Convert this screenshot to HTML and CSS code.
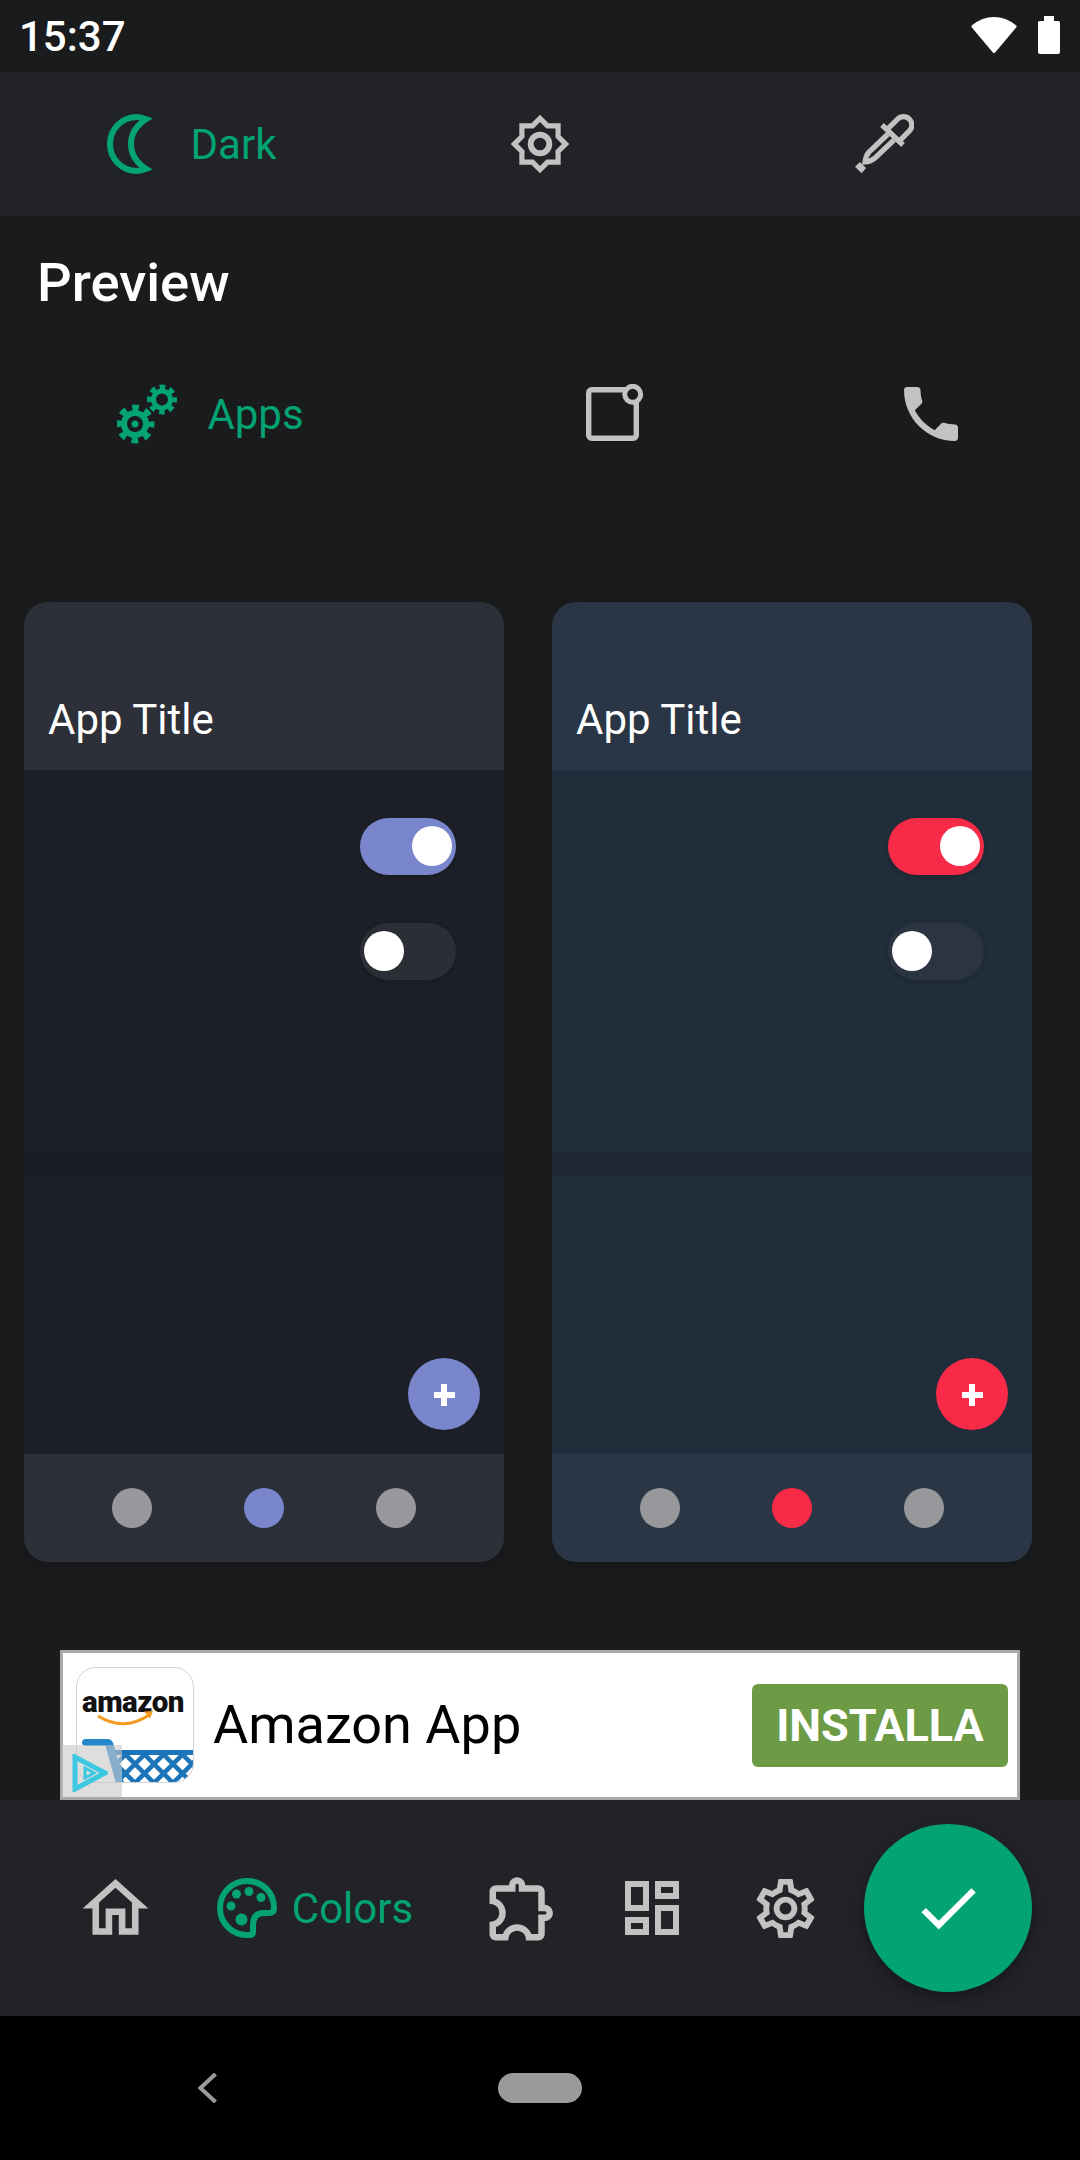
FILE: index.html
```html
<!DOCTYPE html>
<html lang="en">
<head>
<meta charset="utf-8">
<title>Colors</title>
<link rel="stylesheet" href="styles.css">
</head>
<body>
<div class="screen">
  <header class="status">
    <span class="time">15:37</span>
    <div class="status-icons">
      <svg class="wifi" viewBox="0 0 46 36"><path d="M23 34.500 2 9.500C8 4.500 15 1.500 23 1.500s15 3 21 8z" stroke="#fff" stroke-width="3" stroke-linejoin="round"/></svg>
      <svg class="battery" viewBox="0 0 22 38"><path d="M6 0h10v5h4.500q1.500 0 1.500 1.500V36q0 2-2 2H2q-2 0-2-2V6.500Q0 5 1.500 5H6z"/></svg>
    </div>
  </header>

  <nav class="modes">
    <div class="tab tab-active">
      <svg class="ic-moon" viewBox="0 0 46 60"><path class="green-line" stroke-width="6" stroke-miterlimit="12" d="M39 5.200C35 3.800 33 3 30 3 15 3 3 15 3 30s12 27 27 27c3 0 5-.8 9-2.200C30 49 24 40 24 30S30 11 39 5.200z"/></svg>
      <span>Dark</span>
    </div>
    <div class="tab">
      <svg class="ic-62" viewBox="0 0 24 24"><path class="gray" d="M20 8.690V4h-4.690L12 .69 8.690 4H4v4.690L.69 12 4 15.310V20h4.690L12 23.310 15.310 20H20v-4.690L23.310 12 20 8.690zm-2 5.790V18h-3.520L12 20.480 9.520 18H6v-3.520L3.520 12 6 9.520V6h3.520L12 3.520 14.480 6H18v3.520L20.480 12 18 14.480z"/><circle class="gray-ring" cx="12" cy="12" r="3.600" stroke-width="2.300"/></svg>
    </div>
    <div class="tab">
      <svg class="ic-60" viewBox="0 0 60 60"><g class="gray-line" stroke-width="5.200"><path d="M28 11 49 31"/><path d="M33 15.700 43.600 5.100a8.300 8.300 0 0 1 11.800 11.800L45 27.300"/><path d="M34 20 15 38q-3.500 4-4 10 6-.5 10-4l19-18"/></g><path class="gray" d="M1 52.700 6 48l6 6-4.300 5.300z"/></svg>
    </div>
  </nav>

  <main class="content">
    <h1 class="heading">Preview</h1>

    <div class="kinds">
      <div class="tab tab-active">
        <svg class="ic-gears" viewBox="0 0 62 60">
          <g class="green-line">
            <circle cx="18" cy="40" r="11" stroke-width="6"/>
            <circle cx="18" cy="40" r="16" stroke-width="7" stroke-dasharray="6.500 6.070" stroke-dashoffset="3.250"/>
            <circle cx="45" cy="15.500" r="8.500" stroke-width="5"/>
            <circle cx="45" cy="15.500" r="12.500" stroke-width="5" stroke-dasharray="5.500 4.320" stroke-dashoffset="2.750"/>
          </g>
          <circle class="green" cx="18" cy="40" r="3.500"/>
        </svg>
        <span>Apps</span>
      </div>
      <div class="tab">
        <svg class="ic-60" viewBox="0 0 60 60"><rect class="gray-line" x="2.700" y="5.700" width="47.600" height="48.600" rx="3" stroke-width="5.400"/><circle class="dot-ring" cx="46.700" cy="10.300" r="8" stroke-width="5"/></svg>
      </div>
      <div class="tab">
        <svg class="ic-72" viewBox="0 0 24 24"><path class="gray" d="M6.620 10.790c1.440 2.830 3.760 5.140 6.590 6.590l2.200-2.200c.27-.27.67-.36 1.020-.24 1.120.37 2.330.57 3.570.57.55 0 1 .45 1 1V20c0 .55-.45 1-1 1-9.390 0-17-7.610-17-17 0-.55.45-1 1-1h3.500c.55 0 1 .45 1 1 0 1.250.2 2.450.57 3.570.11.35.03.74-.25 1.020l-2.200 2.200z"/></svg>
      </div>
    </div>

    <section class="cards">
      <article class="card card-indigo">
        <div class="card-head">App Title</div>
        <div class="card-body">
          <div class="switch switch-on"><i class="thumb"></i></div>
          <div class="switch"><i class="thumb"></i></div>
        </div>
        <div class="card-rule"></div>
        <div class="card-lower">
          <div class="mini-fab"><i class="plus"></i></div>
        </div>
        <div class="card-foot">
          <i class="dot"></i><i class="dot dot-on"></i><i class="dot"></i>
        </div>
      </article>
      <article class="card card-blue">
        <div class="card-head">App Title</div>
        <div class="card-body">
          <div class="switch switch-on"><i class="thumb"></i></div>
          <div class="switch"><i class="thumb"></i></div>
        </div>
        <div class="card-rule"></div>
        <div class="card-lower">
          <div class="mini-fab"><i class="plus"></i></div>
        </div>
        <div class="card-foot">
          <i class="dot"></i><i class="dot dot-on"></i><i class="dot"></i>
        </div>
      </article>
    </section>

    <aside class="ad">
      <div class="ad-logo">
        <span class="ad-wordmark">amazon</span>
        <svg class="ad-art" viewBox="0 0 118 116">
          <defs>
            <pattern id="net" width="19" height="19" patternUnits="userSpaceOnUse" patternTransform="translate(2 2)">
              <path d="M-2 2 2-2M-2 21 21-2M17 21 21 17M-2 17 2 21M-2-2 21 21M17-2 21 2" stroke="#1c75b8" stroke-width="4.500" fill="none"/>
            </pattern>
          </defs>
          <path d="M22 49Q48 65 73 48" fill="none" stroke="#f39a1f" stroke-width="3"/>
          <path d="M77 44l-9 .5 6 7z" fill="#f39a1f"/>
          <path d="M36 83h81v5H36z" fill="#1c75b8"/>
          <path d="M36 88h81v9q0 19-19 19H44z" fill="url(#net)"/>
          <path d="M10 72h21q5 0 6.500 5L48 116h-8L29.500 79H10q-4 0-4-3.500T10 72z" fill="#2588cc"/>
        </svg>
      </div>
      <span class="ad-title">Amazon App</span>
      <span class="ad-cta">INSTALLA</span>
      <div class="ad-choice">
        <svg class="ad-play" viewBox="0 0 36 38"><path d="M3 3v32l30-16z" fill="none" stroke="#3cc8e0" stroke-width="5"/><path d="M13 14v10l9-5z" fill="none" stroke="#3cc8e0" stroke-width="3"/></svg>
      </div>
    </aside>
  </main>

  <footer class="bar">
    <svg class="ic-79" viewBox="0 0 24 24"><path class="gray" d="M12 5.690l5 4.500V18h-2v-6H9v6H7v-7.810l5-4.500M12 3L2 12h3v8h6v-6h2v6h6v-8h3L12 3z"/></svg>
    <div class="tab tab-active tab-palette">
      <svg class="ic-60" viewBox="0 0 60 60">
        <path class="green-line" stroke-width="6" d="M57 30C57 14 45 3 30 3 15 3 3 15 3 30s12 27 27 27h3q3 0 3-3v-7q0-12 11-12h5q5 0 5-5z"/>
        <circle class="green" cx="14" cy="28" r="4.500"/>
        <circle class="green" cx="19.500" cy="16" r="4.500"/>
        <circle class="green" cx="32" cy="13.500" r="4.500"/>
        <circle class="green" cx="44" cy="19.500" r="4.500"/>
        <circle class="green" cx="24.500" cy="41.500" r="6"/>
      </svg>
      <span>Colors</span>
    </div>
    <svg class="ic-78" viewBox="0 0 24 24"><path class="gray" d="M10.500 4.500c.28 0 .5.22.5.5v2h6v6h2c.28 0 .5.22.5.5s-.22.5-.5.5h-2v6h-2.120c-.68-1.750-2.390-3-4.380-3s-3.700 1.250-4.380 3H4v-2.120c1.750-.68 3-2.390 3-4.380 0-1.990-1.240-3.700-2.990-4.380L4 7h6V5c0-.28.22-.5.5-.5m0-2C9.120 2.500 8 3.620 8 5H4c-1.100 0-1.990.9-1.990 2v3.800h.29c1.490 0 2.700 1.210 2.700 2.700s-1.210 2.700-2.700 2.700H2V20c0 1.100.9 2 2 2h3.800v-.3c0-1.490 1.210-2.700 2.700-2.700s2.700 1.210 2.700 2.700v.3H17c1.100 0 2-.9 2-2v-4c1.380 0 2.500-1.120 2.500-2.500S20.380 11 19 11V7c0-1.100-.9-2-2-2h-4c0-1.380-1.120-2.500-2.500-2.500z"/></svg>
    <svg class="ic-72" viewBox="0 0 24 24"><path class="gray" d="M19 5v2h-4V5h4M9 5v6H5V5h4m10 8v6h-4v-6h4M9 17v2H5v-2h4M21 3h-8v6h8V3zM11 3H3v10h8V3zm10 8h-8v10h8V11zm-10 4H3v6h8v-6z"/></svg>
    <svg class="ic-71" viewBox="0 0 24 24"><path class="gray" d="M19.430 12.980c.04-.32.07-.64.07-.98 0-.34-.03-.66-.07-.98l2.110-1.650c.19-.15.24-.42.12-.64l-2-3.460c-.09-.16-.26-.25-.44-.25-.06 0-.12.01-.17.03l-2.490 1c-.52-.4-1.080-.73-1.690-.98l-.38-2.650C14.460 2.180 14.250 2 14 2h-4c-.25 0-.46.18-.49.42l-.38 2.650c-.61.25-1.170.59-1.690.98l-2.490-1c-.06-.02-.12-.03-.18-.03-.17 0-.34.09-.43.25l-2 3.460c-.13.22-.07.49.12.64l2.110 1.650c-.04.32-.07.65-.07.98 0 .33.03.66.07.98l-2.110 1.650c-.19.15-.24.42-.12.64l2 3.460c.09.16.26.25.44.25.06 0 .12-.01.17-.03l2.490-1c.52.4 1.080.73 1.690.98l.38 2.650c.03.24.24.42.49.42h4c.25 0 .46-.18.49-.42l.38-2.650c.61-.25 1.170-.59 1.690-.98l2.490 1c.06.02.12.03.18.03.17 0 .34-.09.43-.25l2-3.460c.12-.22.07-.49-.12-.64l-2.110-1.650zm-1.980-1.710c.04.31.05.52.05.73 0 .21-.02.43-.05.73l-.14 1.130.89.7 1.080.84-.7 1.210-1.270-.51-1.040-.42-.9.68c-.43.32-.84.56-1.250.73l-1.060.43-.16 1.130-.2 1.350h-1.400l-.19-1.350-.16-1.130-1.060-.43c-.43-.18-.83-.41-1.230-.71l-.91-.7-1.060.43-1.270.51-.7-1.210 1.080-.84.89-.7-.14-1.130c-.03-.31-.05-.54-.05-.74s.02-.43.05-.73l.14-1.130-.89-.7-1.080-.84.7-1.210 1.270.51 1.040.42.9-.68c.43-.32.84-.56 1.250-.73l1.060-.43.16-1.130.2-1.350h1.390l.19 1.350.16 1.130 1.060.43c.43.18.83.41 1.230.71l.91.7 1.060-.43 1.270-.51.7 1.210-1.070.85-.89.7.14 1.130zM12 8c-2.210 0-4 1.790-4 4s1.790 4 4 4 4-1.790 4-4-1.790-4-4-4zm0 6c-1.100 0-2-.9-2-2s.9-2 2-2 2 .9 2 2-.9 2-2 2z"/></svg>
    <div class="fab">
      <svg class="ic-74" viewBox="0 0 24 24"><path class="white" d="M9 16.170L4.830 12l-1.420 1.410L9 19 21 7l-1.410-1.410z"/></svg>
    </div>
  </footer>

  <div class="sysnav">
    <svg class="back" viewBox="0 0 19 30"><path d="M17.500 1 2.500 15l15 14" fill="none" stroke="#9a9a9a" stroke-width="4"/></svg>
    <i class="pill"></i>
  </div>
</div>
</body>
</html>
```
FILE: styles.css
```css
* { box-sizing: border-box; }
html, body { margin: 0; padding: 0; }
body {
  width: 1080px;
  height: 2160px;
  overflow: hidden;
  background: #1a1b1d;
  font-family: Roboto, "Liberation Sans", sans-serif;
  color: #fff;
}
.screen { width: 1080px; height: 2160px; display: flex; flex-direction: column; }
i { display: block; }
svg { display: block; flex: none; }

.gray { fill: #c2c2c2; }
.gray-ring, .gray-line { fill: none; stroke: #c2c2c2; }
.dot-ring { fill: #1a1b1d; stroke: #c2c2c2; }
.green { fill: #03a373; }
.green-line { fill: none; stroke: #03a373; }
.white { fill: #fff; }

.ic-60 { width: 60px; height: 60px; }
.ic-62 { width: 62px; height: 62px; }
.ic-71 { width: 71px; height: 71px; }
.ic-72 { width: 72px; height: 72px; }
.ic-74 { width: 74px; height: 74px; }
.ic-78 { width: 78px; height: 78px; }
.ic-79 { width: 79px; height: 79px; }
.ic-moon { width: 46px; height: 60px; }
.ic-gears { width: 62px; height: 60px; }

.status {
  height: 72px;
  display: flex;
  align-items: center;
  justify-content: space-between;
  padding: 0 20px 0 19px;
}
.time { font-size: 42px; font-weight: 500; line-height: 72px; padding-top: 1px; }
.status-icons { display: flex; align-items: center; gap: 21px; margin-bottom: 2px; }
.wifi { width: 46px; height: 36px; fill: #fff; }
.battery { width: 22px; height: 38px; fill: #fff; }

.tab {
  display: flex;
  align-items: center;
  justify-content: center;
  color: #03a373;
  font-size: 42px;
  line-height: 48px;
}
.tab span { padding-top: 2px; }
.tab-active { gap: 38px; }

.modes {
  height: 144px;
  background: #212327;
  display: grid;
  grid-template-columns: 383px 314px 373px;
  align-items: center;
}

.content { flex: 1; display: flex; flex-direction: column; align-items: stretch; }
.heading {
  margin: 35px 0 0;
  padding-left: 37px;
  font-size: 54.4px;
  font-weight: 500;
  line-height: 64px;
}
.kinds {
  margin-top: 63px;
  height: 72px;
  display: grid;
  grid-template-columns: 421px 390px 240px;
  align-items: center;
}
.kinds .tab-active { gap: 28px; }

.cards {
  margin-top: 152px;
  padding: 0 24px;
  display: flex;
  gap: 48px;
}
.card {
  width: 480px;
  height: 960px;
  border-radius: 24px;
  overflow: hidden;
  display: flex;
  flex-direction: column;
  box-shadow: 0 4px 12px rgba(0, 0, 0, .18);
}
.card-indigo { --head: #2d3038; --body: #1c1f27; --rule: #191c22; --accent: #7986cb; --off: #2c2e35; }
.card-blue { --head: #2a3645; --body: #212d3b; --rule: #1e2833; --accent: #f72a48; --off: #2b3441; }

.card-head {
  height: 168px;
  background: var(--head);
  padding: 94px 24px 0;
  font-size: 42px;
  line-height: 48px;
}
.card-body {
  height: 382px;
  background: var(--body);
  padding: 48px 48px 0 0;
  display: flex;
  flex-direction: column;
  align-items: flex-end;
  gap: 48px;
}
.switch {
  width: 96px;
  height: 57px;
  border-radius: 29px;
  background: var(--off);
  padding: 8px 4px;
  display: flex;
  box-shadow: 0 2px 5px rgba(0, 0, 0, .15);
}
.switch-on { background: var(--accent); justify-content: flex-end; }
.thumb { width: 40px; height: 40px; border-radius: 50%; background: #fff; }
.card-rule { height: 24px; background: var(--rule); }
.card-lower {
  height: 278px;
  background: var(--body);
  padding: 182px 24px 0 0;
  display: flex;
  justify-content: flex-end;
}
.mini-fab {
  width: 72px;
  height: 72px;
  border-radius: 50%;
  background: var(--accent);
  display: flex;
  align-items: center;
  justify-content: center;
}
.plus {
  position: relative;
  width: 21px;
  height: 22px;
  margin-top: 2px;
  background:
    linear-gradient(#fff, #fff) center / 6px 100% no-repeat,
    linear-gradient(#fff, #fff) center / 100% 6px no-repeat;
}
.card-foot {
  flex: 1;
  background: var(--head);
  padding: 0 88px;
  display: flex;
  align-items: center;
  justify-content: space-between;
}
.dot { width: 40px; height: 40px; border-radius: 50%; background: #96989b; }
.dot-on { background: var(--accent); }

.ad {
  position: relative;
  margin: 88px 60px 0;
  height: 150px;
  background: #fff;
  border: 3px solid #a9a9a9;
  display: flex;
  align-items: center;
  padding-left: 13px;
  padding-right: 9px;
}
.ad-logo {
  position: relative;
  width: 118px;
  height: 116px;
  border: 1px solid #d2d2d2;
  border-radius: 20px;
  overflow: hidden;
  flex: none;
}
.ad-wordmark {
  position: absolute;
  left: 5px;
  top: 18px;
  font-weight: 900;
  font-size: 29.5px;
  letter-spacing: -.5px;
  line-height: 32px;
  color: #111;
}
.ad-art { position: absolute; left: -1px; top: -1px; width: 118px; height: 116px; }
.ad-title {
  margin-left: 19px;
  font-size: 54px;
  line-height: 64px;
  color: #000;
}
.ad-cta {
  margin-left: auto;
  width: 256px;
  height: 83px;
  border-radius: 6px;
  background: #6d9b45;
  color: #fff;
  font-size: 45px;
  font-weight: 700;
  line-height: 83px;
  text-align: center;
}
.ad-choice {
  position: absolute;
  left: -1px;
  bottom: 0;
  width: 60px;
  height: 52px;
  background: rgba(200, 200, 200, .6);
  padding: 9px 0 0 10px;
}
.ad-play { width: 36px; height: 38px; }

.bar {
  height: 216px;
  background: #212327;
  display: grid;
  grid-template-columns: 130px 270px 143px 118px 148px 178px;
  justify-items: center;
  align-items: center;
  padding-left: 50px;
}
.tab-palette { gap: 15px; }
.fab {
  width: 168px;
  height: 168px;
  border-radius: 50%;
  background: #03a373;
  display: flex;
  align-items: center;
  justify-content: center;
  box-shadow: 0 6px 14px rgba(0, 0, 0, .3);
}

.sysnav {
  height: 144px;
  background: #000;
  display: flex;
  align-items: center;
  padding-left: 198px;
}
.back { width: 19px; height: 30px; }
.pill { width: 84px; height: 30px; border-radius: 15px; background: #9a9a9a; margin-left: 281px; }
```
